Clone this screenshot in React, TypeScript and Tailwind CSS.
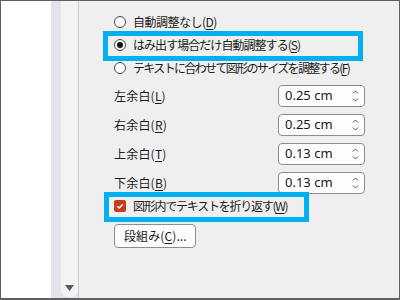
import React from "react";

function Radio({ checked }: { checked?: boolean }) {
  return (
    <span className="w-[12px] h-[12px] rounded-full border border-[#4a4a4a] bg-[#fdfdfd] flex items-center justify-center shrink-0">
      {checked && <span className="w-[6px] h-[6px] rounded-full bg-[#111]" />}
    </span>
  );
}

function Spinner({ value }: { value: string }) {
  return (
    <div className="w-[87px] h-[22px] rounded-[4px] border border-[#8d8d8d] bg-[#fdfdfd] flex items-center pl-[6px] pr-[5px]">
      <span className="flex-1 text-[13px] text-[#1a1a1a] leading-none tracking-normal font-['Noto_Sans',sans-serif]">
        {value}
      </span>
      <svg width="7" height="14" viewBox="0 0 7 14" className="shrink-0">
        <path d="M1 4.5 L3.5 2 L6 4.5" fill="none" stroke="#555" strokeWidth="1" />
        <path d="M1 9.5 L3.5 12 L6 9.5" fill="none" stroke="#555" strokeWidth="1" />
      </svg>
    </div>
  );
}

function Key({ k }: { k: string }) {
  return (
    <>
      (<span className="underline underline-offset-[2px] decoration-[1px]">{k}</span>)
    </>
  );
}

const margins = [
  { label: "左余白", k: "L", v: "0.25 cm" },
  { label: "右余白", k: "R", v: "0.25 cm" },
  { label: "上余白", k: "T", v: "0.13 cm" },
  { label: "下余白", k: "B", v: "0.13 cm" },
];

export default function App() {
  return (
    <div className="relative w-[400px] h-[300px] border-t border-l border-r border-b-2 border-[#5f5f5f] flex bg-white text-[#1b1b1b] text-[12px] font-['Noto_Sans_CJK_JP',sans-serif]">
      <div className="w-[50px] h-full bg-white" />
      <div className="w-[10px] h-full bg-[#e4e4ec]" />
      <div className="w-[17px] h-full bg-[#e4e4ec]">
        <div className="h-[296px] w-full bg-[#f3f3f3] rounded-b-[7px] flex flex-col justify-end items-center pb-[6px]">
          <svg width="9" height="6" viewBox="0 0 9 6">
            <path d="M0 0 H9 L4.5 6 Z" fill="#5a5a5a" />
          </svg>
        </div>
      </div>
      <div className="w-[1px] h-full bg-[#cbcbcb]" />
      <div className="flex-1 h-full bg-[#efefef] pl-[35px] pt-[9px] flex flex-col">
        <div className="h-[23px] flex items-center gap-[7px]">
          <Radio />
          <span className="leading-none whitespace-nowrap tracking-[-0.5px]">自動調整なし<Key k="D" /></span>
        </div>
        <div className="h-[23px] flex items-center gap-[7px]">
          <Radio checked />
          <span className="leading-none whitespace-nowrap tracking-[-0.95px]">はみ出す場合だけ自動調整する<Key k="S" /></span>
        </div>
        <div className="h-[23px] flex items-center gap-[7px]">
          <Radio />
          <span className="leading-none whitespace-nowrap tracking-[-1.65px]">テキストに合わせて図形のサイズを調整する<Key k="F" /></span>
        </div>
        <div className="mt-[2px] flex flex-col">
          {margins.map((m) => (
            <div key={m.k} className="h-[29px] flex items-center">
              <span className="w-[164px] leading-none tracking-[0.2px]">
                {m.label}
                <Key k={m.k} />
              </span>
              <Spinner value={m.v} />
            </div>
          ))}
        </div>
        <div className="h-[18px] flex items-center gap-[7px]">
          <span className="w-[12px] h-[12px] rounded-[2px] bg-[#c43e1c] flex items-center justify-center shrink-0">
            <svg width="10" height="10" viewBox="0 0 10 10">
              <path d="M2.3 5.2 L4.2 7 L7.8 3.2" fill="none" stroke="#fff" strokeWidth="1.4" />
            </svg>
          </span>
          <span className="leading-none whitespace-nowrap tracking-[-1.25px]">図形内でテキストを折り返す<Key k="W" /></span>
        </div>
        <div className="mt-[9px]">
          <div className="w-[82px] h-[24px] rounded-[4px] border border-[#8d8d8d] bg-[#fdfdfd] flex items-center pl-[9px]">
            <span className="leading-none whitespace-nowrap tracking-[0.1px]">段組み<Key k="C" />...</span>
          </div>
        </div>
      </div>
      <div className="absolute left-[102px] top-[30px] w-[260px] h-[30px] border-[5px] border-[#00b0f0] pointer-events-none" />
      <div className="absolute left-[103px] top-[191px] w-[205px] h-[30px] border-[5px] border-[#00b0f0] pointer-events-none" />
    </div>
  );
}
